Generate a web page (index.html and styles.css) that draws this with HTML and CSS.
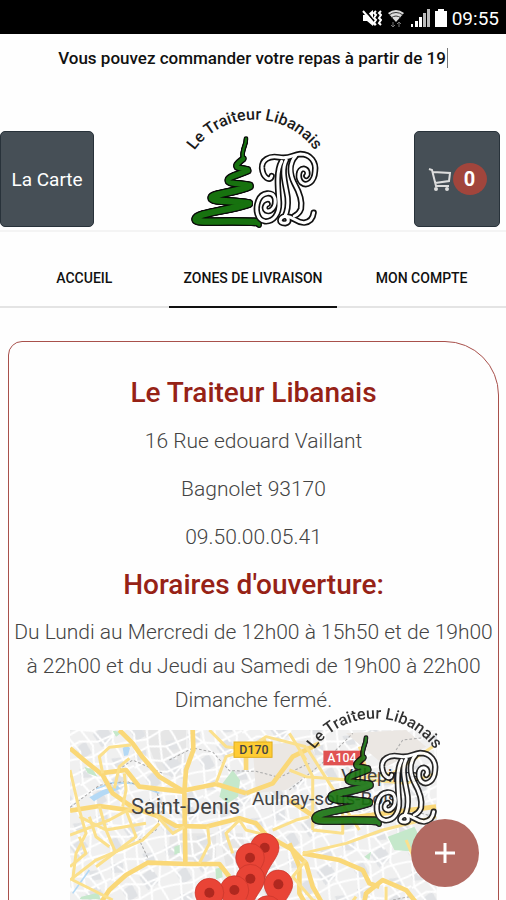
FILE: index.html
```html
<!DOCTYPE html>
<html lang="fr">
<head>
    <meta charset="UTF-8">
    <meta name="viewport" content="width=device-width, initial-scale=1.0">
    <title>Le Traiteur Libanais</title>
    <link rel="stylesheet" href="styles.css">
</head>
<body>
    <svg class="defs" aria-hidden="true">
        <defs>
            <path id="arc" d="M40 173 A222 222 0 0 1 414 173"/>
            <g id="tree">
                <path stroke-width="7" d="M201 128 C203 146 186 160 192 186"/>
                <path stroke-width="13" d="M193 188 C172 204 164 214 182 216 L206 220"/>
                <path stroke-width="16" d="M206 224 C180 236 146 242 148 254 C150 264 190 262 212 268"/>
                <path stroke-width="19" d="M211 271 C180 288 100 292 98 305 C97 318 170 314 209 322"/>
                <path stroke-width="19" d="M209 323 C150 344 54 350 50 369 C48 384 120 372 236 378"/>
                <path stroke-width="10" d="M230 376 L240 387"/>
            </g>
            <g id="monogram">
                <path d="M308 196 C292 224 296 270 300 318 C302 356 282 378 258 376 C234 372 228 340 238 314 C248 288 282 284 288 308 C292 332 276 350 262 344 C254 338 258 326 266 324"/>
                <path d="M322 192 C304 224 322 272 326 306 C328 330 326 344 318 360 C300 366 298 382 318 382 C334 378 328 364 318 360 C348 362 352 382 376 380 C394 378 402 366 404 350"/>
                <path d="M278 240 C274 258 252 246 249 216 C248 192 270 178 300 184 C332 190 340 176 364 174 C396 174 412 200 408 226 C406 258 384 272 368 260 C354 246 358 218 374 218 C386 220 388 234 382 240"/>
                <path d="M350 180 C330 202 332 234 346 262 C364 294 370 318 366 338 C362 350 354 356 346 360"/>
            </g>
            <symbol id="logo" viewBox="0 0 450 420">
                <text class="logo-text"><textPath href="#arc" startOffset="50%">Le Traiteur Libanais</textPath></text>
                <use href="#tree" class="tree-outline"/>
                <use href="#tree" class="tree-fill"/>
                <use href="#monogram" class="mono-outline"/>
                <use href="#monogram" class="mono-fill"/>
            </symbol>
            <symbol id="pin" viewBox="-50 -50 100 150">
                <path class="pin-body" d="M0 -43 A43 43 0 0 1 43 0 C43 30 8 55 0 95 C-8 55 -43 30 -43 0 A43 43 0 0 1 0 -43Z"/>
                <circle class="pin-dot" r="15"/>
            </symbol>
            <pattern id="streets" width="170" height="150" patternUnits="userSpaceOnUse" patternTransform="rotate(-18)">
                <path class="block" d="M12 8 L50 14 L42 44 L8 36Z M82 72 L126 58 L140 104 L96 118Z M20 96 L54 84 L62 124 L30 134Z M112 8 L150 16 L142 44 L116 38Z"/>
                <path class="street" d="M0 20 L60 8 L110 24 L170 20 M0 56 L45 46 L86 62 L170 50 M0 88 L38 80 L90 98 L170 88 M0 126 L60 136 L120 122 L170 126"/>
                <path class="street" d="M20 0 L8 56 L30 110 L20 150 M60 0 L52 50 L72 104 L60 150 M98 0 L86 60 L108 112 L98 150 M142 0 L152 60 L132 112 L142 150 M110 24 L128 70 M30 20 L52 50 M108 112 L140 92"/>
            </pattern>
        </defs>
    </svg>

    <div class="status-bar">
        <svg class="status-icon" viewBox="0 0 20 20" aria-label="Vibreur">
            <path d="M1 7h4l6-5v16l-6-5H1z" fill="#fff"/>
            <path d="M3 2l12 15" stroke="#000" stroke-width="2"/>
            <path d="M1 3l12 14M14 3l-2 2 2 2-2 3 2 2-2 3 2 2M19 3l-2 2 2 2-2 3 2 2-2 3 2 2" stroke="#fff" stroke-width="2" fill="none"/>
        </svg>
        <svg class="status-icon" viewBox="0 0 20 20" aria-label="Wi-Fi">
            <path d="M2 5q8-6 16 0L10 14z" fill="#ddd"/>
            <path d="M3 7q7-5 14 0M5 10q5-4 10 0" stroke="#333" fill="none"/>
            <path d="M7 14v5M5 17l2 2 2-2M13 19v-5M11 16l2-2 2 2" stroke="#777" fill="none"/>
        </svg>
        <svg class="status-icon" viewBox="0 0 20 20" aria-label="Réseau">
            <path d="M1 16h2v3H1zM5 13h3v6H5zM9 9h3v10H9z" fill="#fff"/>
            <path d="M13 5h3v14h-3zM17 1h3v18h-3z" fill="#bbb"/>
        </svg>
        <svg class="status-icon battery" viewBox="0 0 14 20" aria-label="Batterie">
            <path d="M4 1h6v2h3v16H1V3h3z" fill="#fff"/>
        </svg>
        <time>09:55</time>
    </div>

    <p class="banner">Vous pouvez commander votre repas à partir de 19<span class="cursor"></span></p>

    <header class="header">
        <button class="header-btn menu-btn">La Carte</button>
        <svg class="logo" role="img" aria-label="Le Traiteur Libanais"><use href="#logo"/></svg>
        <button class="header-btn cart-btn" aria-label="Panier">
            <svg class="cart-icon" viewBox="0 0 24 24">
                <path d="M1 2l3 1 4 16h13M5 5l17 1-1 8-14 2"/>
                <circle cx="8" cy="22" r="1"/>
                <circle cx="19" cy="22" r="1"/>
            </svg>
            <span class="badge">0</span>
        </button>
    </header>

    <nav class="tabs">
        <a href="#accueil">ACCUEIL</a>
        <a href="#zones" class="active">ZONES DE LIVRAISON</a>
        <a href="#compte">MON COMPTE</a>
    </nav>

    <main class="card">
        <h1>Le Traiteur Libanais</h1>
        <p>16 Rue edouard Vaillant</p>
        <p>Bagnolet 93170</p>
        <p>09.50.00.05.41</p>
        <h2>Horaires d'ouverture:</h2>
        <p class="hours">Du Lundi au Mercredi de 12h00 à 15h50 et de 19h00 à 22h00 et du Jeudi au Samedi de 19h00 à 22h00 Dimanche fermé.</p>

        <svg class="map" viewBox="32 30 1100 540" role="img" aria-label="Carte des zones de livraison">
            <rect x="32" y="30" width="1100" height="540" fill="#f0f0f0"/>
            <path fill="#e6e6e6" d="M250 30h130v150l-80 -20z M330 340h140v80H330z M480 340l70 0 10 70-60 30z"/>
            <rect x="32" y="30" width="1100" height="540" fill="url(#streets)"/>
            <path fill="#ebe7e3" d="M580 80l170-20 30 80-100 70-90 10z M860 40l180-10 60 50-120 60z"/>
            <g class="park">
                <path d="M490 190l30-40 22 30-6 50-30 20-26-20z"/>
                <path d="M985 350l80-30 20 40-20 35-60-5z M915 410l20-15-5 25z M345 380l16-6v24l-16 6z M468 446l18-4 4 30-20 6z M66 530l50-12 8 20H60z M160 32l30 4-20 14z M75 140l26 10 14 20-30-10z"/>
            </g>
            <g class="water">
                <path d="M190 84l12-8 10 8-6 22-12 2z"/>
                <path d="M90 232l40-22 44-14 10 10-50 20-30 18z"/>
                <path class="river" d="M110 206L160 188 220 190 300 220M40 520L90 450"/>
            </g>
            <g class="rail">
                <path d="M32 262L120 196 200 184 290 212 310 260 290 330 240 360 266 415M330 120L400 84 460 96 510 152 590 154 660 172 750 130"/>
                <path d="M170 190L176 150 220 120 310 160M690 210L800 120 880 40M1010 90l20-30 90-10M1120 290l-100-30M1050 530l-50 10-10 40 40 20"/>
            </g>
            <g class="road wide">
                <path d="M32 85L80 125 130 165 160 220 220 262 300 290 350 318 440 320 540 295 590 310 620 345 700 390 740 430 760 500 800 570"/>
                <path d="M180 30L220 70 250 112 300 170 370 212 470 192 560 220M32 272L120 258 220 272M400 30L402 90 380 150 375 215 378 430"/>
                <path d="M110 570L150 510 200 465 265 428 380 432 480 432 510 470"/>
                <path d="M690 370L720 440 720 520 750 570M960 500L930 490 910 450 840 420 730 400M910 570L920 520 970 480 1040 510 1080 560"/>
                <path d="M560 220L640 190 700 110 780 70M620 60L560 90 560 150M690 240L780 300 900 290 1130 260M120 160L200 150 240 200 370 215"/>
            </g>
            <g class="road">
                <path d="M32 150L60 270 80 340 50 400 40 480 100 510 160 540M60 290L140 330 260 310M200 270L230 350 110 440M120 258L140 330 170 400M130 160L120 110 150 82 215 75"/>
                <path d="M165 205L180 140 210 115M290 285L340 340 375 320M470 190L500 110 560 90 620 50 740 80M450 30L500 80 560 88M445 320L450 370 420 430M540 300L500 340 520 400"/>
                <path d="M32 345L150 300 220 262M32 480L110 420 250 360 300 310M195 160L200 210 190 260M90 290L110 350 150 380M32 440L80 400 60 350"/>
                <path d="M640 330L710 300 750 290M690 150L740 170 870 180 1000 160 1120 80M720 90L760 170 760 330M740 120L690 40M740 80L810 190 900 330"/>
                <path d="M730 400L860 370 970 330 1130 290M740 420L700 470 760 540 840 570M850 270L850 340 760 330M900 80L930 180 1040 190 1130 160M980 500l0 70M890 530L860 570M1040 360L1070 430 1130 480M620 345L560 330 540 300"/>
            </g>
            <g class="map-label">
                <rect x="524" y="66" width="114" height="46" fill="#fc3" stroke="#e0ad1f" stroke-width="3"/>
                <text x="540" y="103" class="road-label">D170</text>
                <rect x="792" y="92" width="120" height="44" fill="#e05252"/>
                <text x="804" y="127" class="road-label motorway">A104</text>
                <text x="215" y="282" class="city">Saint-Denis</text>
                <text x="578" y="254" class="town">Aulnay-sous-Bois</text>
                <text x="845" y="186" class="town">Villepinte</text>
            </g>
            <use href="#pin" x="566" y="333" width="100" height="150"/>
            <use href="#pin" x="522" y="363" width="100" height="150"/>
            <use href="#pin" x="523" y="426" width="100" height="150"/>
            <use href="#pin" x="607" y="443" width="100" height="150"/>
            <use href="#pin" x="475" y="460" width="100" height="150"/>
            <use href="#pin" x="400" y="468" width="100" height="150"/>
            <use href="#pin" x="575" y="520" width="100" height="150"/>
        </svg>
    </main>

    <svg class="logo floating-logo" aria-hidden="true"><use href="#logo"/></svg>
    <button class="fab" aria-label="Ajouter">
        <svg viewBox="0 0 20 20"><path d="M10 0v20M0 10h20"/></svg>
    </button>
</body>
</html>
```
FILE: styles.css
```css
* {
    box-sizing: border-box;
    margin: 0;
    padding: 0;
}

body {
    display: flex;
    flex-direction: column;
    height: 100vh;
    overflow: hidden;
    background-color: #fefefe;
    color: #111;
    font-family: Roboto, Arial, sans-serif;
}

.defs {
    position: absolute;
    width: 0;
    height: 0;
}

.status-bar {
    display: flex;
    flex-shrink: 0;
    justify-content: flex-end;
    align-items: center;
    gap: 4px;
    height: 34px;
    padding: 2px 7px 0 0;
    background-color: #000;
    color: #fff;
    font-size: 19px;
}

.status-icon {
    width: 20px;
    height: 20px;
}

.status-icon.battery {
    width: 14px;
}

.banner {
    display: flex;
    justify-content: center;
    align-items: center;
    height: 48px;
    flex-shrink: 0;
    font-size: 17px;
    font-weight: 500;
}

.cursor {
    width: 1px;
    height: 20px;
    margin-left: 1px;
    background-color: #777;
}

.header {
    display: flex;
    flex-shrink: 0;
    justify-content: space-between;
    align-items: center;
    height: 150px;
    padding: 46px 6px 0 0;
    border-bottom: 2px solid #f4f4f4;
}

.header-btn {
    display: flex;
    justify-content: center;
    align-items: center;
    height: 96px;
    border: 1px solid #28323a;
    border-radius: 5px;
    background-color: #464f56;
    color: #fff;
    font-family: inherit;
    font-size: 19px;
    cursor: pointer;
}

.menu-btn {
    width: 94px;
}

.cart-btn {
    width: 86px;
    gap: 1px;
}

.cart-icon {
    width: 24px;
    height: 24px;
    fill: none;
    stroke: #ddd;
    stroke-width: 2;
}

.badge {
    width: 34px;
    border-radius: 50%;
    background-color: #a1453c;
    font-size: 20px;
    font-weight: 700;
    line-height: 32px;
    text-align: center;
}

.logo {
    width: 150px;
    height: 140px;
    margin-top: -26px;
}

.logo-text {
    fill: #1a1a1a;
    font-family: Roboto, sans-serif;
    font-size: 48px;
    font-weight: 500;
    text-anchor: middle;
}

.tree-outline,
.tree-fill,
.mono-outline,
.mono-fill {
    fill: none;
    stroke-linecap: round;
    stroke-linejoin: round;
}

.tree-outline {
    stroke: #0a0a0a;
    filter: drop-shadow(0 3px 0 #0a0a0a) drop-shadow(0 -3px 0 #0a0a0a) drop-shadow(3px 0 0 #0a0a0a) drop-shadow(-3px 0 0 #0a0a0a);
}

.tree-fill {
    stroke: #17720f;
}

.mono-outline {
    stroke: #111;
    stroke-width: 19;
}

.mono-fill {
    stroke: #fff;
    stroke-width: 9;
}

.tabs {
    display: flex;
    flex-shrink: 0;
    height: 76px;
}

.tabs a {
    flex: 1;
    padding-top: 16px;
    border-bottom: 2px solid #e4e4e4;
    color: #111;
    font-size: 14px;
    font-weight: 500;
    line-height: 60px;
    text-align: center;
    text-decoration: none;
}

.tabs a.active {
    border-bottom-color: #111;
}

.card {
    flex: 1 0 auto;
    margin: 33px 7px 0 8px;
    padding-top: 27px;
    border: 1px solid #a8504b;
    border-radius: 14px 54px 0 0;
    font-size: 21px;
    font-weight: 300;
    line-height: 48px;
    text-align: center;
}

.card h1,
.card h2 {
    color: #962216;
    font-size: 28px;
    font-weight: 500;
    line-height: 48px;
}

.card p {
    color: #444;
}

.card .hours {
    padding-top: 6px;
    line-height: 34px;
}

.map {
    display: block;
    width: 75%;
    margin: 13px auto 0;
}

.street {
    fill: none;
    stroke: #fff;
    stroke-width: 6;
}

.block {
    fill: #e0e2e5;
}

.park {
    fill: #c5e8cb;
}

.water {
    fill: #b4d9f5;
}

.river {
    fill: none;
    stroke: #b4d9f5;
    stroke-width: 5;
}

.rail {
    fill: none;
    stroke: #aaa;
    stroke-width: 3;
    stroke-dasharray: 8 6;
}

.road {
    fill: none;
    stroke: #fbe08c;
    stroke-width: 9;
    stroke-linejoin: round;
}

.road.wide {
    stroke: #fad878;
    stroke-width: 14;
}

.map-label {
    fill: #444;
    font-weight: 400;
}

.city {
    font-size: 65px;
}

.town {
    font-size: 57px;
}

.road-label {
    font-size: 37px;
    font-weight: 500;
}

.motorway {
    fill: #fff;
}

.pin-body {
    fill: #e94436;
    stroke: #c5362c;
    stroke-width: 2;
}

.pin-dot {
    fill: #b0281f;
}

.floating-logo {
    position: fixed;
    right: 57px;
    bottom: 65px;
    opacity: 0.9;
}

.fab {
    position: fixed;
    right: 27px;
    bottom: 13px;
    display: flex;
    justify-content: center;
    align-items: center;
    width: 68px;
    height: 68px;
    border: none;
    border-radius: 50%;
    background-color: #b26a62;
    cursor: pointer;
}

.fab svg {
    width: 20px;
    height: 20px;
    stroke: #fff;
    stroke-width: 3;
}
```
